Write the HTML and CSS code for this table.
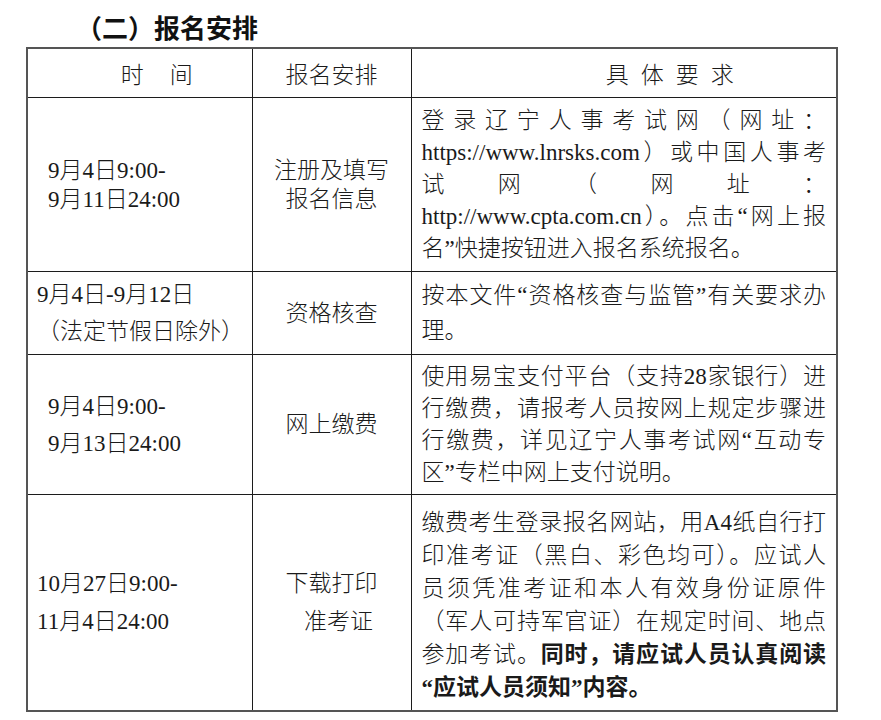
FILE: index.html
```html
<!DOCTYPE html>
<html lang="zh-CN">
<head>
<meta charset="utf-8">
<title>报名安排</title>
<link rel="stylesheet" href="styles.css">
</head>
<body>
<div class="page">
  <h2 class="sec-title">（二）报名安排</h2>
  <table class="sched">
    <colgroup>
      <col class="c-time">
      <col class="c-item">
      <col class="c-req">
    </colgroup>
    <thead>
      <tr class="r-head">
        <th class="h-time">时<span class="gap"></span>间</th>
        <th class="h-item">报名安排</th>
        <th class="h-req">具体要求</th>
      </tr>
    </thead>
    <tbody>
      <tr class="r1">
        <td class="time indent lh29">9月4日9:00-<br>9月11日24:00</td>
        <td class="item lh29">注册及填写<br>报名信息</td>
        <td class="req lh32">
          <span class="ln">登录辽宁人事考试网（网址：</span>
          <span class="ln">https://www.lnrsks.com）或中国人事考</span>
          <span class="ln">试网（网址：</span>
          <span class="ln">http://www.cpta.com.cn）。点击“网上报</span>
          <span class="ln last">名”快捷按钮进入报名系统报名。</span>
        </td>
      </tr>
      <tr class="r2">
        <td class="time lh37">9月4日-9月12日<br>（法定节假日除外）</td>
        <td class="item lh37">资格核查</td>
        <td class="req lh35">
          <span class="ln">按本文件“资格核查与监管”有关要求办</span>
          <span class="ln last">理。</span>
        </td>
      </tr>
      <tr class="r3">
        <td class="time indent lh37">9月4日9:00-<br>9月13日24:00</td>
        <td class="item lh37">网上缴费</td>
        <td class="req lh32">
          <span class="ln">使用易宝支付平台（支持28家银行）进</span>
          <span class="ln">行缴费，请报考人员按网上规定步骤进</span>
          <span class="ln">行缴费，详见辽宁人事考试网“互动专</span>
          <span class="ln last">区”专栏中网上支付说明。</span>
        </td>
      </tr>
      <tr class="r4">
        <td class="time lh38">10月27日9:00-<br>11月4日24:00</td>
        <td class="item lh38">下载打印<br><span class="shift">准考证</span></td>
        <td class="req lh33 nudge">
          <span class="ln">缴费考生登录报名网站，用A4纸自行打</span>
          <span class="ln">印准考证（黑白、彩色均可）。应试人</span>
          <span class="ln">员须凭准考证和本人有效身份证原件</span>
          <span class="ln">（军人可持军官证）在规定时间、地点</span>
          <span class="ln">参加考试。<b>同时，请应试人员认真阅读</b></span>
          <span class="ln last"><b>“应试人员须知”内容。</b></span>
        </td>
      </tr>
    </tbody>
  </table>
  <h2 class="sec-title next">（三）缴费标准</h2>
</div>
</body>
</html>
```

FILE: styles.css
```css
html, body {
  margin: 0;
  padding: 0;
  background: #ffffff;
}

body {
  font-family: "Liberation Serif", "Noto Sans CJK SC", serif;
  color: #1a1a1a;
}

.page {
  padding: 11px 0 0 26px;
  width: 810px;
}

.sec-title {
  margin: 0 0 0 50px;
  height: 36px;
  font-size: 26px;
  line-height: 32px;
  font-weight: bold;
  font-family: "Noto Sans CJK SC", sans-serif;
  color: #111;
}

.sec-title.next {
  margin-top: 7px;
}

.sched {
  border-collapse: collapse;
  table-layout: fixed;
  width: 810px;
  border: 2px solid #555;
  font-size: 23px;
}

.c-time { width: 225px; }
.c-item { width: 159px; }
.c-req { width: 426px; }

.sched th,
.sched td {
  border: 1px solid #1c1c1c;
  vertical-align: middle;
  padding: 0;
  font-weight: 300;
}

.sched th {
  font-family: "Noto Sans CJK SC", sans-serif;
  height: 48px;
  text-align: center;
  line-height: 28px;
}

.sched .h-time { padding-left: 34px; }
.h-time .gap { display: inline-block; width: 26px; }
.sched .h-req { padding-left: 104px; letter-spacing: 12px; }

.sched .time {
  text-align: left;
  padding-left: 9px;
}

.sched .time.indent { padding-left: 20px; }

.sched .item { text-align: center; }

.item .shift { padding-left: 14px; }

.sched .req {
  padding: 0 10px 0 10px;
}

.sched .req.nudge {
  padding-top: 4px;
}

.ln {
  display: block;
  text-align: justify;
  text-align-last: justify;
}

.ln.last {
  text-align-last: left;
}

.ln b { font-weight: bold; }

.lh29 { line-height: 29px; }
.lh32 { line-height: 32px; }
.lh33 { line-height: 33px; }
.lh35 { line-height: 35px; }
.lh37 { line-height: 37px; }
.lh38 { line-height: 38px; }

.r1 td { height: 173px; }
.r2 td { height: 82px; }
.r3 td { height: 139px; }
.r4 td { height: 211px; }
```
